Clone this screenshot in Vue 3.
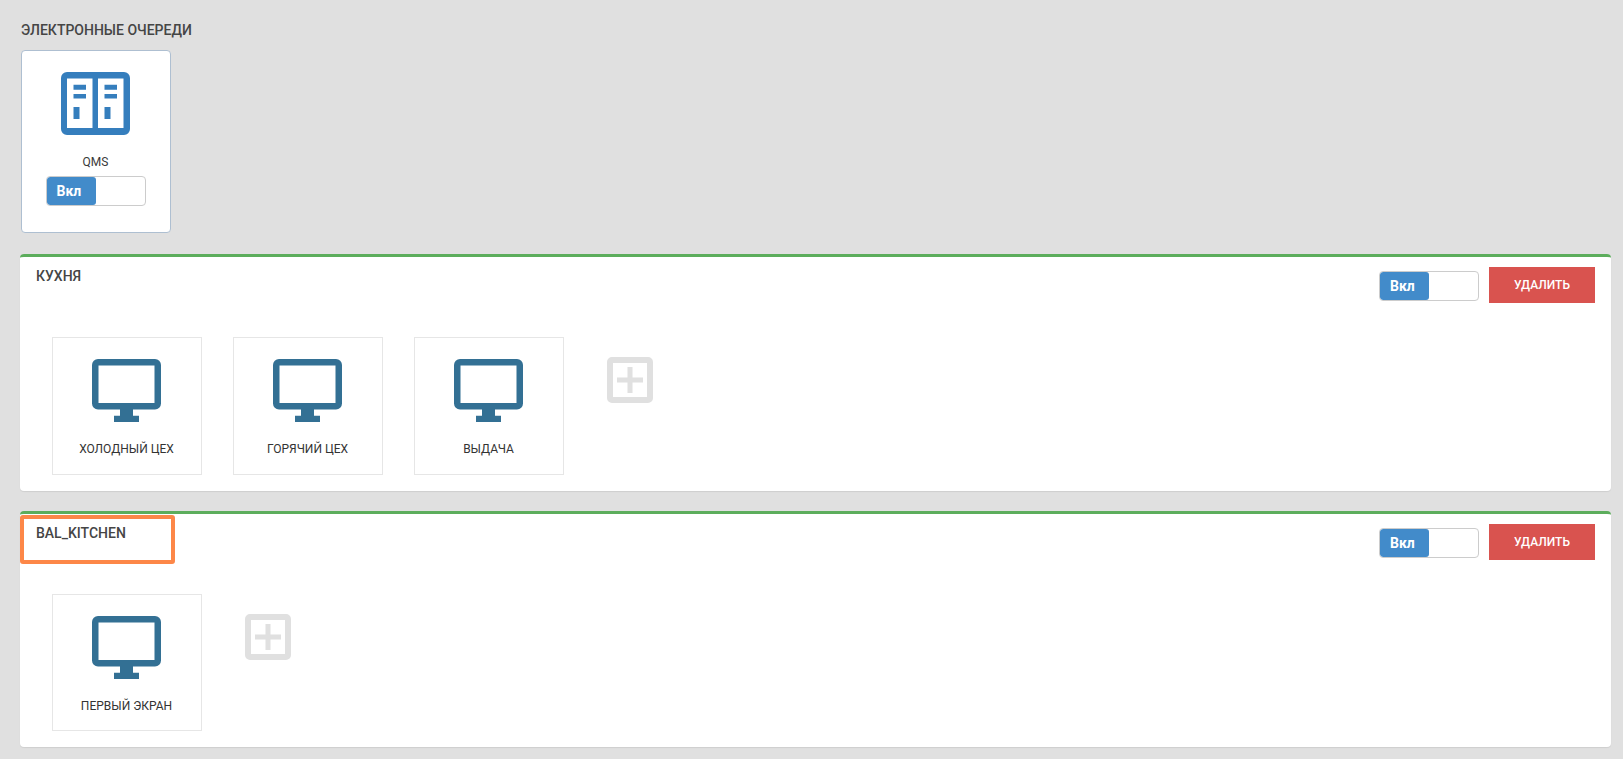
<template>
  <div class="page">
    <h4 class="section-title">ЭЛЕКТРОННЫЕ ОЧЕРЕДИ</h4>
    <div class="qms-card">
      <svg class="qms-icon" viewBox="0 0 69 63" width="69" height="63">
        <path fill="#357ebd" fill-rule="evenodd" d="M6 0h57a6 6 0 0 1 6 6v51a6 6 0 0 1-6 6H6a6 6 0 0 1-6-6V6a6 6 0 0 1 6-6zM6 6.500V56h25.500V6.500zM37 6.500V56h25.500V6.500z" />
        <path fill="#357ebd" d="M12.500 12.700H25v5H12.500zM12.500 22H25v4.500H12.500zM12.500 35h6v12h-6zM43.500 12.700H56v5H43.500zM43.500 22H56v4.500H43.500zM43.500 35h6v12h-6z" />
      </svg>
      <div class="qms-name">QMS</div>
      <div class="switch">
        <span class="switch-on">Вкл</span>
      </div>
    </div>

    <section v-for="group in groups" :key="group.name" class="panel">
      <div class="panel-head">
        <div class="panel-title">{{ group.name }}</div>
        <div class="panel-actions">
          <div class="switch">
            <span class="switch-on">Вкл</span>
          </div>
          <button class="btn-delete">УДАЛИТЬ</button>
        </div>
      </div>
      <div class="screens">
        <div v-for="screen in group.screens" :key="screen" class="screen-card">
          <svg viewBox="0 0 69 63" width="69" height="63">
            <path fill="#337094" fill-rule="evenodd" d="M6 0h57a6 6 0 0 1 6 6v38.500a6 6 0 0 1-6 6H41v6.200h6V63H22v-6.300h6v-6.200H6a6 6 0 0 1-6-6V6a6 6 0 0 1 6-6zM6.500 6.400V44h56V6.400z" />
          </svg>
          <div class="screen-name">{{ screen }}</div>
        </div>
        <svg class="add-icon" viewBox="0 0 46 46" width="46" height="46">
          <path fill="#e0e0e0" fill-rule="evenodd" d="M5 0h36a5 5 0 0 1 5 5v36a5 5 0 0 1-5 5H5a5 5 0 0 1-5-5V5a5 5 0 0 1 5-5zM6 6v34h34V6z" />
          <path fill="#e0e0e0" d="M20.500 10h5v10.500H36v5H25.500V36h-5V25.500H10v-5h10.500z" />
        </svg>
      </div>
      <div v-if="group.marked" class="highlight"></div>
    </section>
  </div>
</template>

<script setup>
const groups = [
  { name: 'КУХНЯ', screens: ['ХОЛОДНЫЙ ЦЕХ', 'ГОРЯЧИЙ ЦЕХ', 'ВЫДАЧА'], marked: false },
  { name: 'BAL_KITCHEN', screens: ['ПЕРВЫЙ ЭКРАН'], marked: true }
]
</script>

<style>
html,
body {
  margin: 0;
  background: #e0e0e0;
}
</style>

<style scoped>
.page {
  box-sizing: border-box;
  height: 759px;
  padding: 21px 12px 0 20px;
  overflow: hidden;
  background: #e0e0e0;
  font-family: Roboto, "Liberation Sans", sans-serif;
  color: #3a3a3a;
}

.section-title {
  margin: 0 0 11px 1px;
  font-size: 14px;
  line-height: 18px;
  font-weight: 500;
  color: #454545;
}

.qms-card {
  box-sizing: border-box;
  width: 150px;
  height: 183px;
  margin: 0 0 21px 1px;
  padding: 21px 1px 0 0;
  background: #fff;
  border: 1px solid #aebfd1;
  border-radius: 4px;
  display: flex;
  flex-direction: column;
  align-items: center;
}

.qms-name {
  margin-top: 19px;
  margin-bottom: 6px;
  font-size: 12px;
  line-height: 16px;
}

.switch {
  box-sizing: border-box;
  width: 100px;
  height: 30px;
  background: #fff;
  border: 1px solid #ccc;
  border-radius: 4px;
  overflow: hidden;
}

.switch-on {
  display: block;
  width: 49px;
  height: 28px;
  padding-left: 10px;
  box-sizing: border-box;
  background: #428bca;
  border-radius: 3px;
  color: #fff;
  font-size: 14px;
  font-weight: 700;
  line-height: 28px;
}

.panel {
  position: relative;
  box-sizing: border-box;
  height: 237px;
  margin-bottom: 20px;
  background: #fff;
  border-top: 3px solid #5cad5c;
  border-radius: 4px;
  box-shadow: 0 1px 1px rgba(0, 0, 0, 0.08);
}

.panel + .panel {
  height: 236px;
}

.panel-head {
  display: flex;
  justify-content: space-between;
  align-items: flex-start;
  box-sizing: border-box;
  height: 80px;
  padding: 10px 16px 0 16px;
}

.panel-title {
  font-size: 14px;
  font-weight: 500;
  line-height: 18px;
  color: #454545;
}

.panel-actions {
  display: flex;
  align-items: flex-start;
  gap: 10px;
}

.panel-actions .switch {
  margin-top: 4px;
}

.btn-delete {
  width: 106px;
  height: 36px;
  border: none;
  background: #d9534f;
  color: #fff;
  font-family: inherit;
  font-size: 12px;
  font-weight: 500;
}

.screens {
  display: flex;
  gap: 31px;
  padding-left: 32px;
}

.screen-card {
  box-sizing: border-box;
  width: 150px;
  height: 138px;
  padding: 21px 1px 0 0;
  border: 1px solid #e6e6e6;
  display: flex;
  flex-direction: column;
  align-items: center;
}

.panel + .panel .screen-card {
  height: 137px;
}

.screen-name {
  margin-top: 19px;
  font-size: 12px;
  line-height: 16px;
  color: #333;
}

.add-icon {
  margin: 20px 0 0 12px;
}

.highlight {
  position: absolute;
  left: 0;
  top: 1px;
  width: 155px;
  height: 49px;
  box-sizing: border-box;
  border: 4px solid #fd8748;
  border-radius: 3px;
}
</style>
